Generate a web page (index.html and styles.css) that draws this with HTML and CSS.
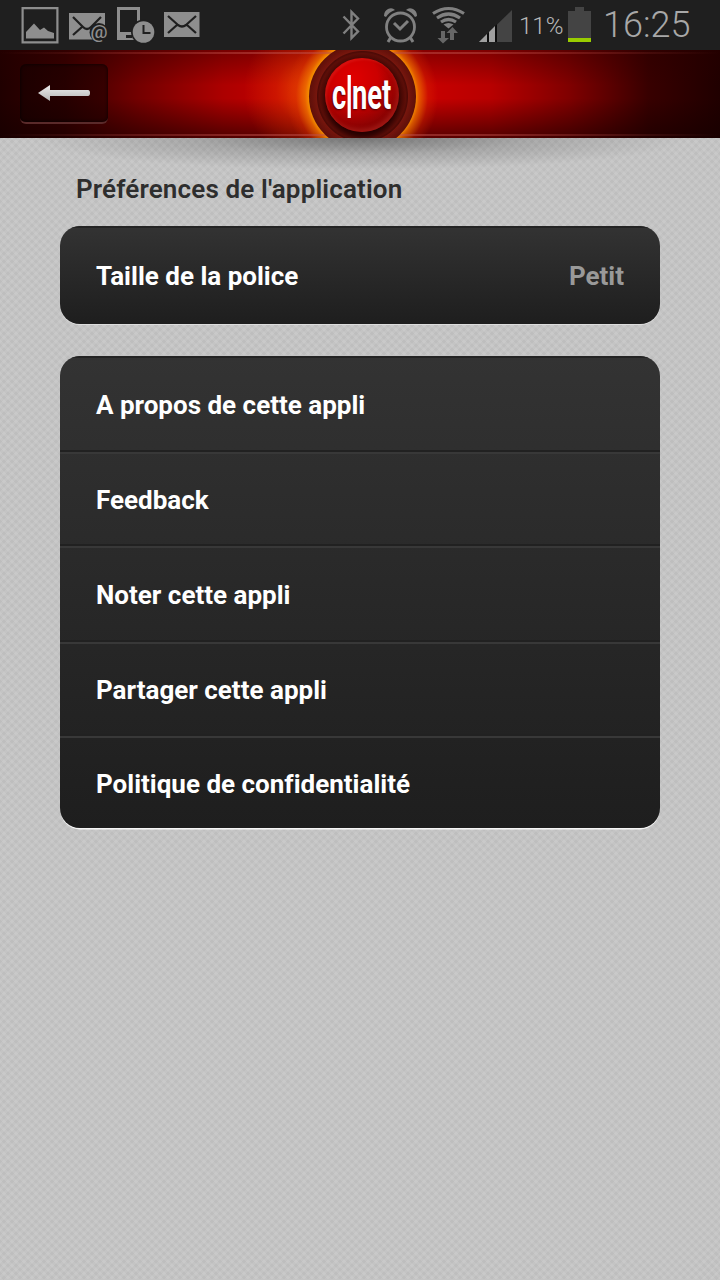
FILE: index.html
```html
<!DOCTYPE html>
<html lang="fr">
<head>
    <meta charset="UTF-8">
    <meta name="viewport" content="width=device-width, initial-scale=1.0">
    <title>Préférences de l'application</title>
    <link rel="stylesheet" href="styles.css">
</head>
<body>
    <div class="status-bar">
        <svg class="notifications" width="210" height="50" viewBox="0 0 210 50" fill="#8e8e8e">
            <!-- image -->
            <path fill-rule="evenodd" d="M21.500 7H58.500v36.500H21.500zM23.700 9.200v32h32.600v-32z"/>
            <path d="M26 38.500V32l8-8.500 6 6.500 4-2.500 4 3.500 6 2v5.500z"/>
            <!-- mail -->
            <path d="M69 13h36v26.500H69z"/>
            <path d="M73 17l10 10q4 4 8 0L101 17M73 35l9-8M92 27l8 8" fill="none" stroke="#1f1f1f" stroke-width="2.2"/>
            <circle cx="99" cy="32.500" r="9.500" fill="#1f1f1f"/>
            <text class="at-sign" x="99" y="38" text-anchor="middle">@</text>
            <!-- device -->
            <path fill-rule="evenodd" d="M117 7h23v33h-23zM120 10v22h17V10z"/>
            <path d="M126 35h6v3h-6z" fill="#1f1f1f"/>
            <circle cx="143.500" cy="32" r="12.500" fill="#1f1f1f"/>
            <circle cx="143.500" cy="32" r="10.800"/>
            <path d="M143.500 25v8h7" fill="none" stroke="#1f1f1f" stroke-width="2"/>
            <!-- mail -->
            <path d="M164 12h35.500v25H164z"/>
            <path d="M168 16l10 9q4 3 8 0l10-9M168 33l9-8M187 25l9 8" fill="none" stroke="#1f1f1f" stroke-width="2.200"/>
        </svg>
        <svg class="indicators" width="180" height="50" viewBox="335 0 180 50" fill="#808080">
            <!-- bluetooth -->
            <path d="M343.500 16.500L358 31.500L351.500 38V12l6.500 6.500L343.500 33.500" fill="none" stroke="#808080" stroke-width="2.400"/>
            <!-- alarm -->
            <circle cx="400.500" cy="27" r="14" fill="none" stroke="#808080" stroke-width="2.800"/>
            <path d="M394 23l6 6 8-8M391 37l-3 5M410 37l3 5" fill="none" stroke="#808080" stroke-width="3"/>
            <path d="M384 16q0-5 4-7 4-2 7 1-6 2-9 7zM417 16q0-5-4-7-4-2-7 1 6 2 9 7z"/>
            <!-- wifi -->
            <g fill="none" stroke="#808080" stroke-width="3.200">
                <path d="M433 13.500q15.500-10 31 0"/>
                <path d="M437 18q11.500-8 23 0"/>
                <path d="M441 22q7.500-5 15 0"/>
            </g>
            <path d="M443.500 24.500q5-3 10 0l-5 4z"/>
            <path d="M441 31h4v7h4l-6 5.500-5.500-5.500h3.500zM450 40v-7h-3.500l6-6 5.500 6H454v7z" fill="#666"/>
            <!-- signal -->
            <path d="M512 10v32h-33z" fill="#444"/>
            <path d="M479 42l8-8v8zM489 42V32l6-6v16z" fill="#a0a0a0"/>
            <path d="M487 34l2-2v10h-2zM495 26l2-2v18h-2z" fill="#0c0c0c"/>
        </svg>
        <span class="battery-level">11%</span>
        <span class="battery"></span>
        <span class="clock">16:25</span>
    </div>

    <div class="header">
        <a class="back-btn" href="#" aria-label="Retour">
            <svg width="54" height="18" viewBox="0 0 54 18">
                <defs>
                    <linearGradient id="arrow" x1="0" y1="0" x2="0" y2="1">
                        <stop offset="0" stop-color="#eee"/>
                        <stop offset="1" stop-color="#b4b4b4"/>
                    </linearGradient>
                </defs>
                <path d="M1 9L13 1v5h38q2 0 2 3t-2 3H13v5z" fill="url(#arrow)"/>
            </svg>
        </a>
        <div class="logo">
            <div class="ball">
                <span class="wordmark">c<i></i>net</span>
            </div>
        </div>
    </div>

    <div class="content">
        <h1>Préférences de l'application</h1>

        <div class="list">
            <div class="row">Taille de la police <span class="value">Petit</span></div>
        </div>

        <div class="list menu">
            <div class="row">A propos de cette appli</div>
            <div class="row">Feedback</div>
            <div class="row">Noter cette appli</div>
            <div class="row">Partager cette appli</div>
            <div class="row">Politique de confidentialité</div>
        </div>
    </div>
</body>
</html>
```
FILE: styles.css
```css
* {
    margin: 0;
    padding: 0;
    box-sizing: border-box;
}

body {
    font-family: Roboto, sans-serif;
    font-variant-ligatures: none;
    min-height: 100vh;
    background-color: #bebebe;
    background-image:
        repeating-linear-gradient(45deg, rgba(255, 255, 255, 0.09) 0 2.828px, transparent 2.828px 5.657px),
        repeating-linear-gradient(-45deg, rgba(255, 255, 255, 0.09) 0 2.828px, transparent 2.828px 5.657px);
}

.status-bar {
    display: flex;
    align-items: center;
    height: 50px;
    background: #1f1f1f;
    color: #999;
}

.indicators {
    margin-left: 125px;
}

.at-sign {
    font-size: 19px;
    font-weight: 500;
}

.battery-level {
    width: 48px;
    margin-left: 4px;
    padding-top: 2px;
    font-size: 24px;
    font-weight: 300;
    white-space: nowrap;
    color: #b8b8b8;
}

.battery {
    width: 23px;
    height: 35px;
    margin-left: 1px;
    margin-bottom: 1px;
    background:
        linear-gradient(#99cc00, #99cc00) bottom / 23px 4px no-repeat,
        linear-gradient(#444, #444) bottom / 23px 31px no-repeat,
        linear-gradient(#444, #444) top / 9px 5px no-repeat;
}

.clock {
    margin-left: 12px;
    font-size: 36px;
    font-weight: 300;
    color: #a8a8a8;
}

.header {
    display: flex;
    align-items: flex-start;
    height: 88px;
    padding: 14px 20px 0;
    overflow: hidden;
    background:
        linear-gradient(90deg, transparent, rgba(190, 80, 75, 0.5) 35%, rgba(190, 80, 75, 0.5) 65%, transparent) 0 2px / 100% 2px no-repeat,
        linear-gradient(90deg, transparent, rgba(190, 80, 75, 0.5) 35%, rgba(190, 80, 75, 0.5) 65%, transparent) 0 84px / 100% 2px no-repeat,
        radial-gradient(circle at 362px 46px, #f59000 53px, rgba(240, 115, 0, 0.75) 57px, rgba(225, 50, 0, 0.3) 66px, transparent 76px),
        radial-gradient(ellipse 64px 70px at 308px 40px, rgba(235, 95, 0, 0.7), rgba(225, 60, 0, 0.35) 50%, transparent),
        linear-gradient(rgba(40, 0, 0, 0.4), transparent 40%, transparent 55%, rgba(20, 0, 0, 0.6)),
        linear-gradient(90deg, #200000, #380000 9%, #720000 19%, #ac0000 31%, #c60000 40%, #c60000 60%, #b80000 68%, #800000 79%, #380000 90%, #200000);
}

.back-btn {
    display: flex;
    align-items: center;
    justify-content: center;
    width: 88px;
    height: 60px;
    border-bottom: 2px solid #5a2a2a;
    border-radius: 6px;
    background: linear-gradient(90deg, rgba(12, 0, 0, 0.4), rgba(20, 0, 0, 0.5));
    box-shadow: inset 0 0 3px 1px rgba(0, 0, 0, 0.5);
}

.logo {
    display: flex;
    justify-content: center;
    width: 107px;
    height: 107px;
    margin: -21px 0 0 201px;
    padding: 15px 1px 0 0;
    flex-shrink: 0;
    border-radius: 50%;
    background: radial-gradient(circle, #3c0704 36px, #540c07 41px, #5c0e08 43px, #4c0a06 45px, #76160d 46px, #68120b 50px, #601009 53px);
}

.ball {
    display: flex;
    justify-content: center;
    width: 74px;
    height: 74px;
    border-radius: 50%;
    background: radial-gradient(circle at 38% 28%, #e00000, #cc0000 35%, #850303 72%, #660505);
    box-shadow: inset 2px 2px 2px rgba(255, 100, 90, 0.15), inset -2px -3px 4px rgba(220, 60, 50, 0.35), 0 7px 6px -2px #250000;
}

.wordmark {
    display: flex;
    align-items: center;
    font-size: 42px;
    font-weight: 700;
    line-height: 74px;
    color: #fff;
    text-shadow: -1px 1px 2px #500;
    transform: scaleX(0.65);
}

.wordmark i {
    width: 5px;
    height: 43px;
    margin: 2px 2px 0;
    background: #fff;
}

.content {
    height: 1142px;
    padding: 36px 60px 0;
    background: radial-gradient(ellipse 330px 32px at 50% 0, rgba(0, 0, 0, 0.4), rgba(0, 0, 0, 0.15) 50%, transparent);
}

h1 {
    height: 52px;
    padding-left: 16px;
    font-size: 26px;
    line-height: 30px;
    font-weight: 600;
    letter-spacing: 0.15px;
    color: #2e2e2e;
}

.list {
    margin-bottom: 32px;
    border-radius: 20px;
    overflow: hidden;
    background: linear-gradient(#333, #1e1e1e);
    box-shadow: 0 1px 0 #ddd;
    font-size: 26px;
    font-weight: 700;
    color: #fff;
}

.row {
    display: flex;
    align-items: center;
    justify-content: space-between;
    height: 98px;
    padding-right: 36px;
    padding-left: 36px;
    border-top: 2px solid #242424;
}

.value {
    color: #999;
}

.menu {
    box-shadow: 0 2px 0 -0.5px #f5f5f5;
}

.menu .row {
    height: 94px;
    padding-top: 1px;
    border-top: 2px solid #383838;
    border-bottom: 2px solid #212121;
}

.menu .row:first-child {
    height: 96px;
    padding-top: 2px;
    border-top-color: #242424;
}

.menu .row:nth-child(3) {
    height: 96px;
    padding-top: 2px;
}

.menu .row:last-child {
    height: 92px;
    border-bottom: none;
}
```
